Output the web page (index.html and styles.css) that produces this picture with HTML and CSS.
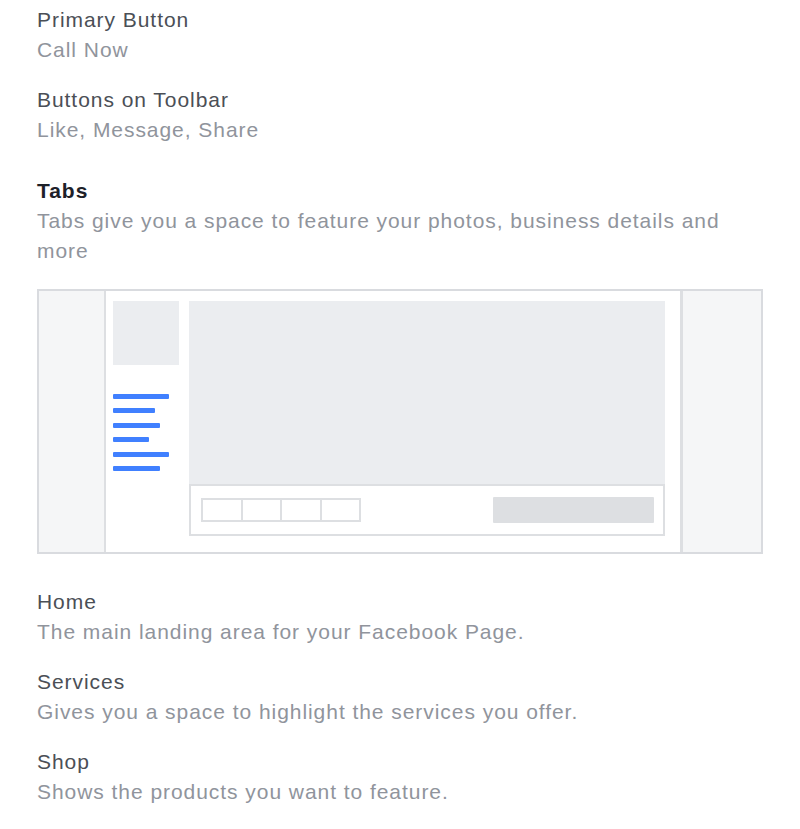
FILE: index.html
```html
<!DOCTYPE html>
<html lang="en">
<head>
<meta charset="utf-8">
<title>Tabs</title>
<link rel="stylesheet" href="styles.css">
</head>
<body>
<div class="page">
  <div class="item">
    <div class="item-title">Primary Button</div>
    <div class="item-desc">Call Now</div>
  </div>
  <div class="item">
    <div class="item-title">Buttons on Toolbar</div>
    <div class="item-desc">Like, Message, Share</div>
  </div>
  <div class="section">
    <div class="section-title">Tabs</div>
    <div class="item-desc">Tabs give you a space to feature your photos, business details and more</div>
  </div>
  <div class="diagram">
    <div class="side side-left"></div>
    <div class="center">
      <div class="sidebar">
        <div class="avatar"></div>
        <div class="tab-lines">
          <div class="tab-line w56"></div>
          <div class="tab-line w42"></div>
          <div class="tab-line w47"></div>
          <div class="tab-line w36"></div>
          <div class="tab-line w56"></div>
          <div class="tab-line w47"></div>
        </div>
      </div>
      <div class="main">
        <div class="cover"></div>
        <div class="toolbar">
          <div class="tool-group">
            <div class="tool-cell"></div>
            <div class="tool-cell"></div>
            <div class="tool-cell"></div>
            <div class="tool-cell"></div>
          </div>
          <div class="tool-button"></div>
        </div>
      </div>
    </div>
    <div class="side side-right"></div>
  </div>
  <div class="tabs-list">
    <div class="item">
      <div class="item-title">Home</div>
      <div class="item-desc">The main landing area for your Facebook Page.</div>
    </div>
    <div class="item">
      <div class="item-title">Services</div>
      <div class="item-desc">Gives you a space to highlight the services you offer.</div>
    </div>
    <div class="item">
      <div class="item-title">Shop</div>
      <div class="item-desc">Shows the products you want to feature.</div>
    </div>
  </div>
</div>
</body>
</html>
```
FILE: styles.css
```css
html, body {
  margin: 0;
  padding: 0;
  background: #ffffff;
}

.page {
  padding: 5px 37px 0 37px;
  font-family: "Liberation Sans", Arial, sans-serif;
  font-size: 21px;
  line-height: 30px;
  letter-spacing: 0.95px;
}

.item {
  margin-bottom: 20px;
}

.item-title {
  color: #4b4f56;
}

.item-desc {
  color: #90949c;
}

.section {
  margin-top: 31px;
}

.section-title {
  color: #1d2129;
  font-weight: bold;
}

.diagram {
  margin-top: 23px;
  height: 261px;
  border: 2px solid #d9dbdf;
  display: flex;
}

.side {
  background: #f5f6f7;
}

.side-left {
  width: 65px;
  border-right: 2px solid #dddfe2;
}

.side-right {
  width: 78px;
  border-left: 3px solid #dddfe2;
}

.center {
  flex: 1;
  display: flex;
  gap: 10px;
  padding: 10px 15px 16px 7px;
  background: #ffffff;
}

.sidebar {
  width: 66px;
}

.avatar {
  height: 64px;
  background: #ebedf0;
}

.tab-lines {
  margin-top: 29px;
  display: flex;
  flex-direction: column;
  gap: 9.4px;
}

.tab-line {
  height: 5px;
  background: #4080ff;
  border-radius: 1px;
}

.w56 { width: 56px; }
.w47 { width: 47px; }
.w42 { width: 42px; }
.w36 { width: 36px; }

.main {
  width: 476px;
  display: flex;
  flex-direction: column;
}

.cover {
  flex: 1;
  background: #ebedf0;
}

.toolbar {
  height: 48px;
  border: 2px solid #dddfe2;
  background: #ffffff;
  display: flex;
  align-items: center;
  justify-content: space-between;
  padding: 0 9px 0 10px;
}

.tool-group {
  display: flex;
  width: 160px;
  height: 24px;
  box-sizing: border-box;
  border: 2px solid #dddfe2;
}

.tool-cell {
  flex: 1;
}

.tool-cell + .tool-cell {
  border-left: 2px solid #dddfe2;
}

.tool-button {
  width: 161px;
  height: 26px;
  background: #dddfe2;
  border-radius: 1px;
}

.tabs-list {
  margin-top: 33px;
}
```
